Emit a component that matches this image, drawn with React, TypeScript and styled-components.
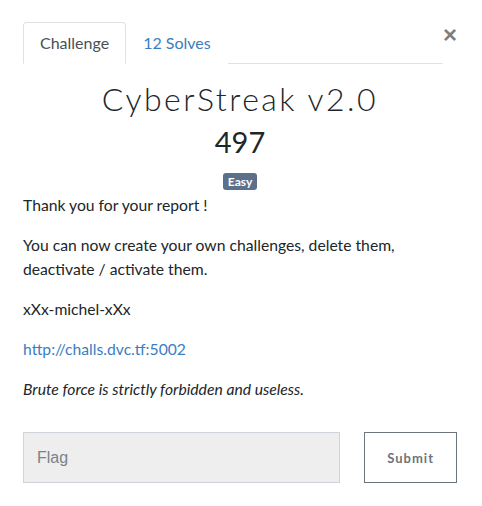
import React from "react";
import styled, { createGlobalStyle } from "styled-components";

const Global = createGlobalStyle`
  html, body { margin: 0; padding: 0; background: #fff; }
  body { font-family: Lato, "Noto Sans", sans-serif; color: #212529; font-size: 16px; line-height: 24px; }
  * { box-sizing: border-box; }
`;

const Modal = styled.div`
  width: 482px;
  padding: 22px 25px 0 23px;
`;

const Header = styled.div`
  display: flex;
  align-items: flex-start;
`;

const Tabs = styled.nav`
  flex: 1;
  display: flex;
  border-bottom: 1px solid #dee2e6;
  height: 42px;
`;

const Tab = styled.a<{ $active?: boolean }>`
  display: block;
  height: 42px;
  padding: 8px 16px;
  font-size: 16px;
  line-height: 24px;
  text-decoration: none;
  color: ${(p) => (p.$active ? "#495057" : "#3b7dc0")};
  border: 1px solid ${(p) => (p.$active ? "#dee2e6" : "transparent")};
  border-bottom-color: ${(p) => (p.$active ? "#fff" : "transparent")};
  border-radius: 4px 4px 0 0;
  background: #fff;
  margin-bottom: -1px;
`;

const Close = styled.button`
  border: 0;
  background: none;
  padding: 0;
  margin: 1px 0 0 0;
  width: 14px;
  height: 24px;
  font-family: "Liberation Sans", Arial, sans-serif;
  font-size: 24px;
  font-weight: 700;
  line-height: 24px;
  color: #000;
  opacity: 0.5;
  display: flex;
  align-items: center;
  justify-content: center;
`;

const Title = styled.h2`
  margin: 15px 0 0;
  text-align: center;
  font-family: Lato, sans-serif;
  font-weight: 300;
  font-size: 32px;
  line-height: 40px;
  letter-spacing: 2.5px;
  color: #212529;
`;

const Value = styled.h3`
  margin: 6px 0 0;
  text-align: center;
  font-weight: 400;
  font-size: 29px;
  line-height: 34px;
  color: #212529;
`;

const TagRow = styled.div`
  display: flex;
  justify-content: center;
  margin-top: 14px;
`;

const Badge = styled.span`
  display: inline-block;
  background: #5c6f8b;
  color: #fff;
  font-weight: 700;
  font-size: 12px;
  line-height: 17px;
  height: 17px;
  padding: 0 5px;
  border-radius: 3px;
`;

const Description = styled.div`
  margin-top: 3px;
`;

const P = styled.p`
  margin: 0 0 16px;
  font-size: 15.7px;
  line-height: 24px;
`;

const Link = styled.a`
  color: #3b7dc0;
  text-decoration: none;
`;

const Form = styled.form`
  display: flex;
  gap: 24px;
  margin-top: 31px;
`;

const Input = styled.input`
  width: 318px;
  height: 51px;
  background: #eeeeee;
  border: 1px solid #ced4da;
  padding: 0 13px;
  font-family: "Liberation Sans", Arial, sans-serif;
  font-size: 16px;
  color: #495057;
  outline: none;
  &::placeholder { color: #7a8289; }
`;

const Submit = styled.button`
  width: 93px;
  height: 51px;
  background: #fff;
  border: 1px solid #6c757d;
  color: #6c757d;
  font-family: Lato, sans-serif;
  font-weight: 700;
  font-size: 13px;
  letter-spacing: 1px;
  padding: 0;
`;

export default function App() {
  return (
    <>
      <Global />
      <Modal>
        <Header>
          <Tabs>
            <Tab $active href="#">Challenge</Tab>
            <Tab href="#">12 Solves</Tab>
          </Tabs>
          <Close aria-label="Close">×</Close>
        </Header>
        <Title>CyberStreak v2.0</Title>
        <Value>497</Value>
        <TagRow>
          <Badge>Easy</Badge>
        </TagRow>
        <Description>
          <P>Thank you for your report !</P>
          <P>You can now create your own challenges, delete them, deactivate / activate them.</P>
          <P>xXx-michel-xXx</P>
          <P>
            <Link href="#">http://challs.dvc.tf:5002</Link>
          </P>
          <P>
            <em>Brute force is strictly forbidden and useless.</em>
          </P>
        </Description>
        <Form onSubmit={(e) => e.preventDefault()}>
          <Input placeholder="Flag" />
          <Submit type="submit">Submit</Submit>
        </Form>
      </Modal>
    </>
  );
}
